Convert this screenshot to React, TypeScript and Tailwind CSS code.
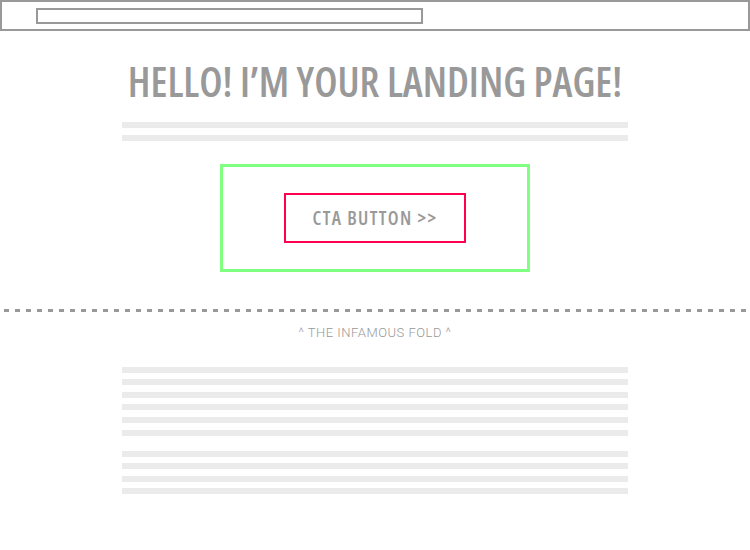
import React from "react";

function GrayLines({ count }: { count: number }) {
  return (
    <div className="mx-auto flex w-[506px] flex-col gap-[6.6px]">
      {Array.from({ length: count }).map((_, i) => (
        <div key={i} className="h-[6px] bg-[#ebebeb]" />
      ))}
    </div>
  );
}

export default function App() {
  return (
    <div className="h-[550px] w-[750px] overflow-hidden bg-white font-['Roboto',sans-serif]">
      {/* browser-ish bar */}
      <div className="h-[31px] border-2 border-[#999999]">
        <div className="ml-[34px] mt-[6px] h-[16px] w-[387px] border-2 border-[#999999]" />
      </div>

      <h1 className="mt-[30px] text-center font-['Open_Sans',sans-serif] text-[41px] font-semibold leading-none text-[#999999] font-stretch-[75%]">
        HELLO! I’M YOUR LANDING PAGE!
      </h1>

      <div className="mt-[20px]">
        <GrayLines count={2} />
      </div>

      <div className="mx-auto mt-[23px] flex h-[108px] w-[310px] items-center justify-center border-[3px] border-[#80ff80]">
        <button className="flex h-[50px] w-[182px] items-center justify-center border-2 border-[#ff0050] pt-px font-['Open_Sans',sans-serif] text-[19px] font-semibold tracking-[1.4px] text-[#999999] font-stretch-[75%]">
          CTA BUTTON &gt;&gt;
        </button>
      </div>

      <div className="mt-[37px] h-[3px] bg-[repeating-linear-gradient(90deg,transparent_0_4px,#999999_4px_9px,transparent_9px_11px)]" />

      <p className="mt-[13px] text-center text-[13px] font-light leading-4 tracking-[0.5px] text-[#999999]">
        ^ THE INFAMOUS FOLD ^
      </p>

      <div className="mt-[26px]">
        <GrayLines count={6} />
      </div>
      <div className="mt-[15px]">
        <GrayLines count={4} />
      </div>
    </div>
  );
}
